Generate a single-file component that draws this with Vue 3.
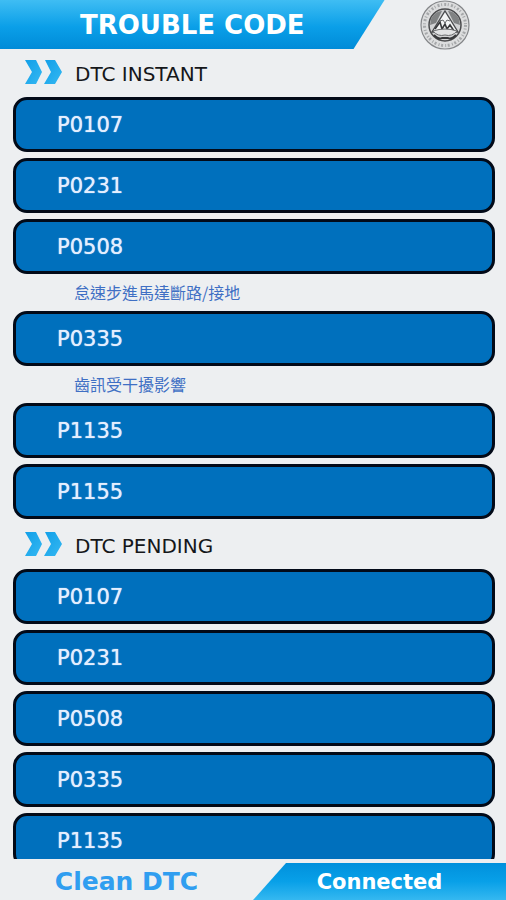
<script setup>
import { ref } from 'vue'

const sections = [
  {
    title: 'DTC INSTANT',
    codes: [
      { code: 'P0107' },
      { code: 'P0231' },
      { code: 'P0508', note: '怠速步進馬達斷路/接地' },
      { code: 'P0335', note: '齒訊受干擾影響' },
      { code: 'P1135' },
      { code: 'P1155' },
    ],
  },
  {
    title: 'DTC PENDING',
    codes: [
      { code: 'P0107' },
      { code: 'P0231' },
      { code: 'P0508' },
      { code: 'P0335' },
      { code: 'P1135' },
    ],
  },
]
const status = ref('Connected')
</script>

<template>
  <div class="screen">
    <header class="header">
      <h1 class="banner">TROUBLE CODE</h1>
      <div class="brand">
        <svg class="seal" viewBox="0 0 50 50" aria-hidden="true">
          <circle cx="25" cy="25" r="24" fill="#dcddde" stroke="#85878a" stroke-width="1.2" />
          <circle cx="25" cy="25" r="20.5" fill="none" stroke="#a6a8aa" stroke-width="3" stroke-dasharray="2 1.6 1 2.2" />
          <circle cx="25" cy="25" r="16" fill="#d2d3d4" stroke="#4a4b4d" stroke-width="1.5" />
          <path d="M11 19 Q15 11 22 11 L16 23 L10 25Z M39 19 Q35 11 28 11 L34 23 L40 25Z" fill="#808283" />
          <path d="M25 11 L38 32 H12Z" fill="#f4f5f5" stroke="#4a4b4d" stroke-width="1.4" />
          <path d="M20 21 L23 20 L25 23 L27 20 L30 21" fill="none" stroke="#6a6b6d" stroke-width="1" />
          <path d="M15 29 L20 22 L22 29 L25 24 L27 29 L30 25 L34 31" fill="none" stroke="#38393b" stroke-width="1.6" />
          <path d="M13 31 Q25 27 37 31 Q32 37 25 35 Q18 37 13 31Z" fill="#e2e3e4" stroke="#6a6b6d" stroke-width="1" />
          <path d="M14 35 Q19 40 22 38 H28 Q31 40 36 35" fill="none" stroke="#38393b" stroke-width="2" />
        </svg>
      </div>
    </header>

    <main class="list">
      <section v-for="section in sections" :key="section.title" class="section">
        <h2 class="heading">
          <svg class="chevrons" viewBox="0 0 37 24" aria-hidden="true">
            <defs>
              <linearGradient id="chevron-fill" x1="0" y1="0" x2="1" y2="1">
                <stop offset="0" stop-color="#119fe8" />
                <stop offset="1" stop-color="#35b8f2" />
              </linearGradient>
            </defs>
            <path d="M0 0H11L17 12L11 24H0L7 12Z" fill="url(#chevron-fill)" />
            <path d="M20 0H30L37 12L30 24H19L26 12Z" fill="url(#chevron-fill)" />
          </svg>
          <span>{{ section.title }}</span>
        </h2>
        <ul class="codes">
          <li v-for="item in section.codes" :key="item.code">
            <button type="button" class="code">{{ item.code }}</button>
            <p v-if="item.note" class="note">{{ item.note }}</p>
          </li>
        </ul>
      </section>
    </main>

    <footer class="footer">
      <button type="button" class="clean">Clean DTC</button>
      <div class="status" role="status">{{ status }}</div>
    </footer>
  </div>
</template>

<style>
body {
  margin: 0;
  background: #edeff1;
}
</style>

<style scoped>
.screen {
  display: flex;
  flex-direction: column;
  height: 100vh;
  overflow: hidden;
  background: #edeff1;
  font-family: "DejaVu Sans", "Noto Sans CJK TC", sans-serif;
}

.header {
  display: flex;
  flex: none;
  height: 49px;
}

.banner {
  display: flex;
  align-items: center;
  justify-content: center;
  width: 76%;
  margin: 0;
  background: linear-gradient(#3fbdf3, #0a9fe8 55%, #008bd8);
  clip-path: polygon(0 0, 100% 0, calc(100% - 31px) 100%, 0 100%);
  color: #fff;
  font-size: 26px;
  font-weight: 700;
  white-space: nowrap;
}

.brand {
  display: flex;
  flex: 1;
  align-items: center;
  justify-content: center;
}

.seal {
  width: 50px;
  height: 50px;
}

.list {
  flex: 1;
  min-height: 0;
  overflow: hidden;
}

.heading {
  display: flex;
  align-items: center;
  gap: 13px;
  height: 46px;
  margin: 0;
  padding: 0 0 2px 25px;
  color: #15171a;
  font-size: 20px;
  font-weight: 400;
  line-height: 24px;
}

.heading span {
  padding-top: 4px;
}

.chevrons {
  width: 37px;
  height: 24px;
}

.codes {
  display: flex;
  flex-direction: column;
  gap: 6px;
  margin: 0;
  padding: 0 11px 2px 13px;
  list-style: none;
}

.code {
  display: block;
  width: 100%;
  height: 55px;
  padding: 0 41px;
  border: 3px solid #020a18;
  border-radius: 14px;
  background: #0070bd;
  color: #e4efff;
  font-family: inherit;
  font-size: 21px;
  line-height: 24px;
  text-align: left;
  text-shadow: 0 0 1px #e4efff;
}

.note {
  margin: 0;
  padding: 6px 0 1px 61px;
  color: #3f6fc4;
  font-family: "Noto Sans CJK TC", sans-serif;
  font-size: 16px;
  line-height: 24px;
}

.footer {
  display: flex;
  flex: none;
  height: 37px;
  padding-top: 4px;
}

.clean,
.status {
  display: flex;
  flex: 1;
  align-items: center;
  justify-content: center;
  font-weight: 700;
}

.clean {
  padding: 0;
  border: 0;
  background: none;
  color: #309ef0;
  font-family: inherit;
  font-size: 25px;
}

.status {
  background: linear-gradient(#0090dc, #08a0e8 50%, #35b8f0);
  clip-path: polygon(33px 0, 100% 0, 100% 100%, 0 100%);
  color: #fff;
  font-size: 21px;
}
</style>
